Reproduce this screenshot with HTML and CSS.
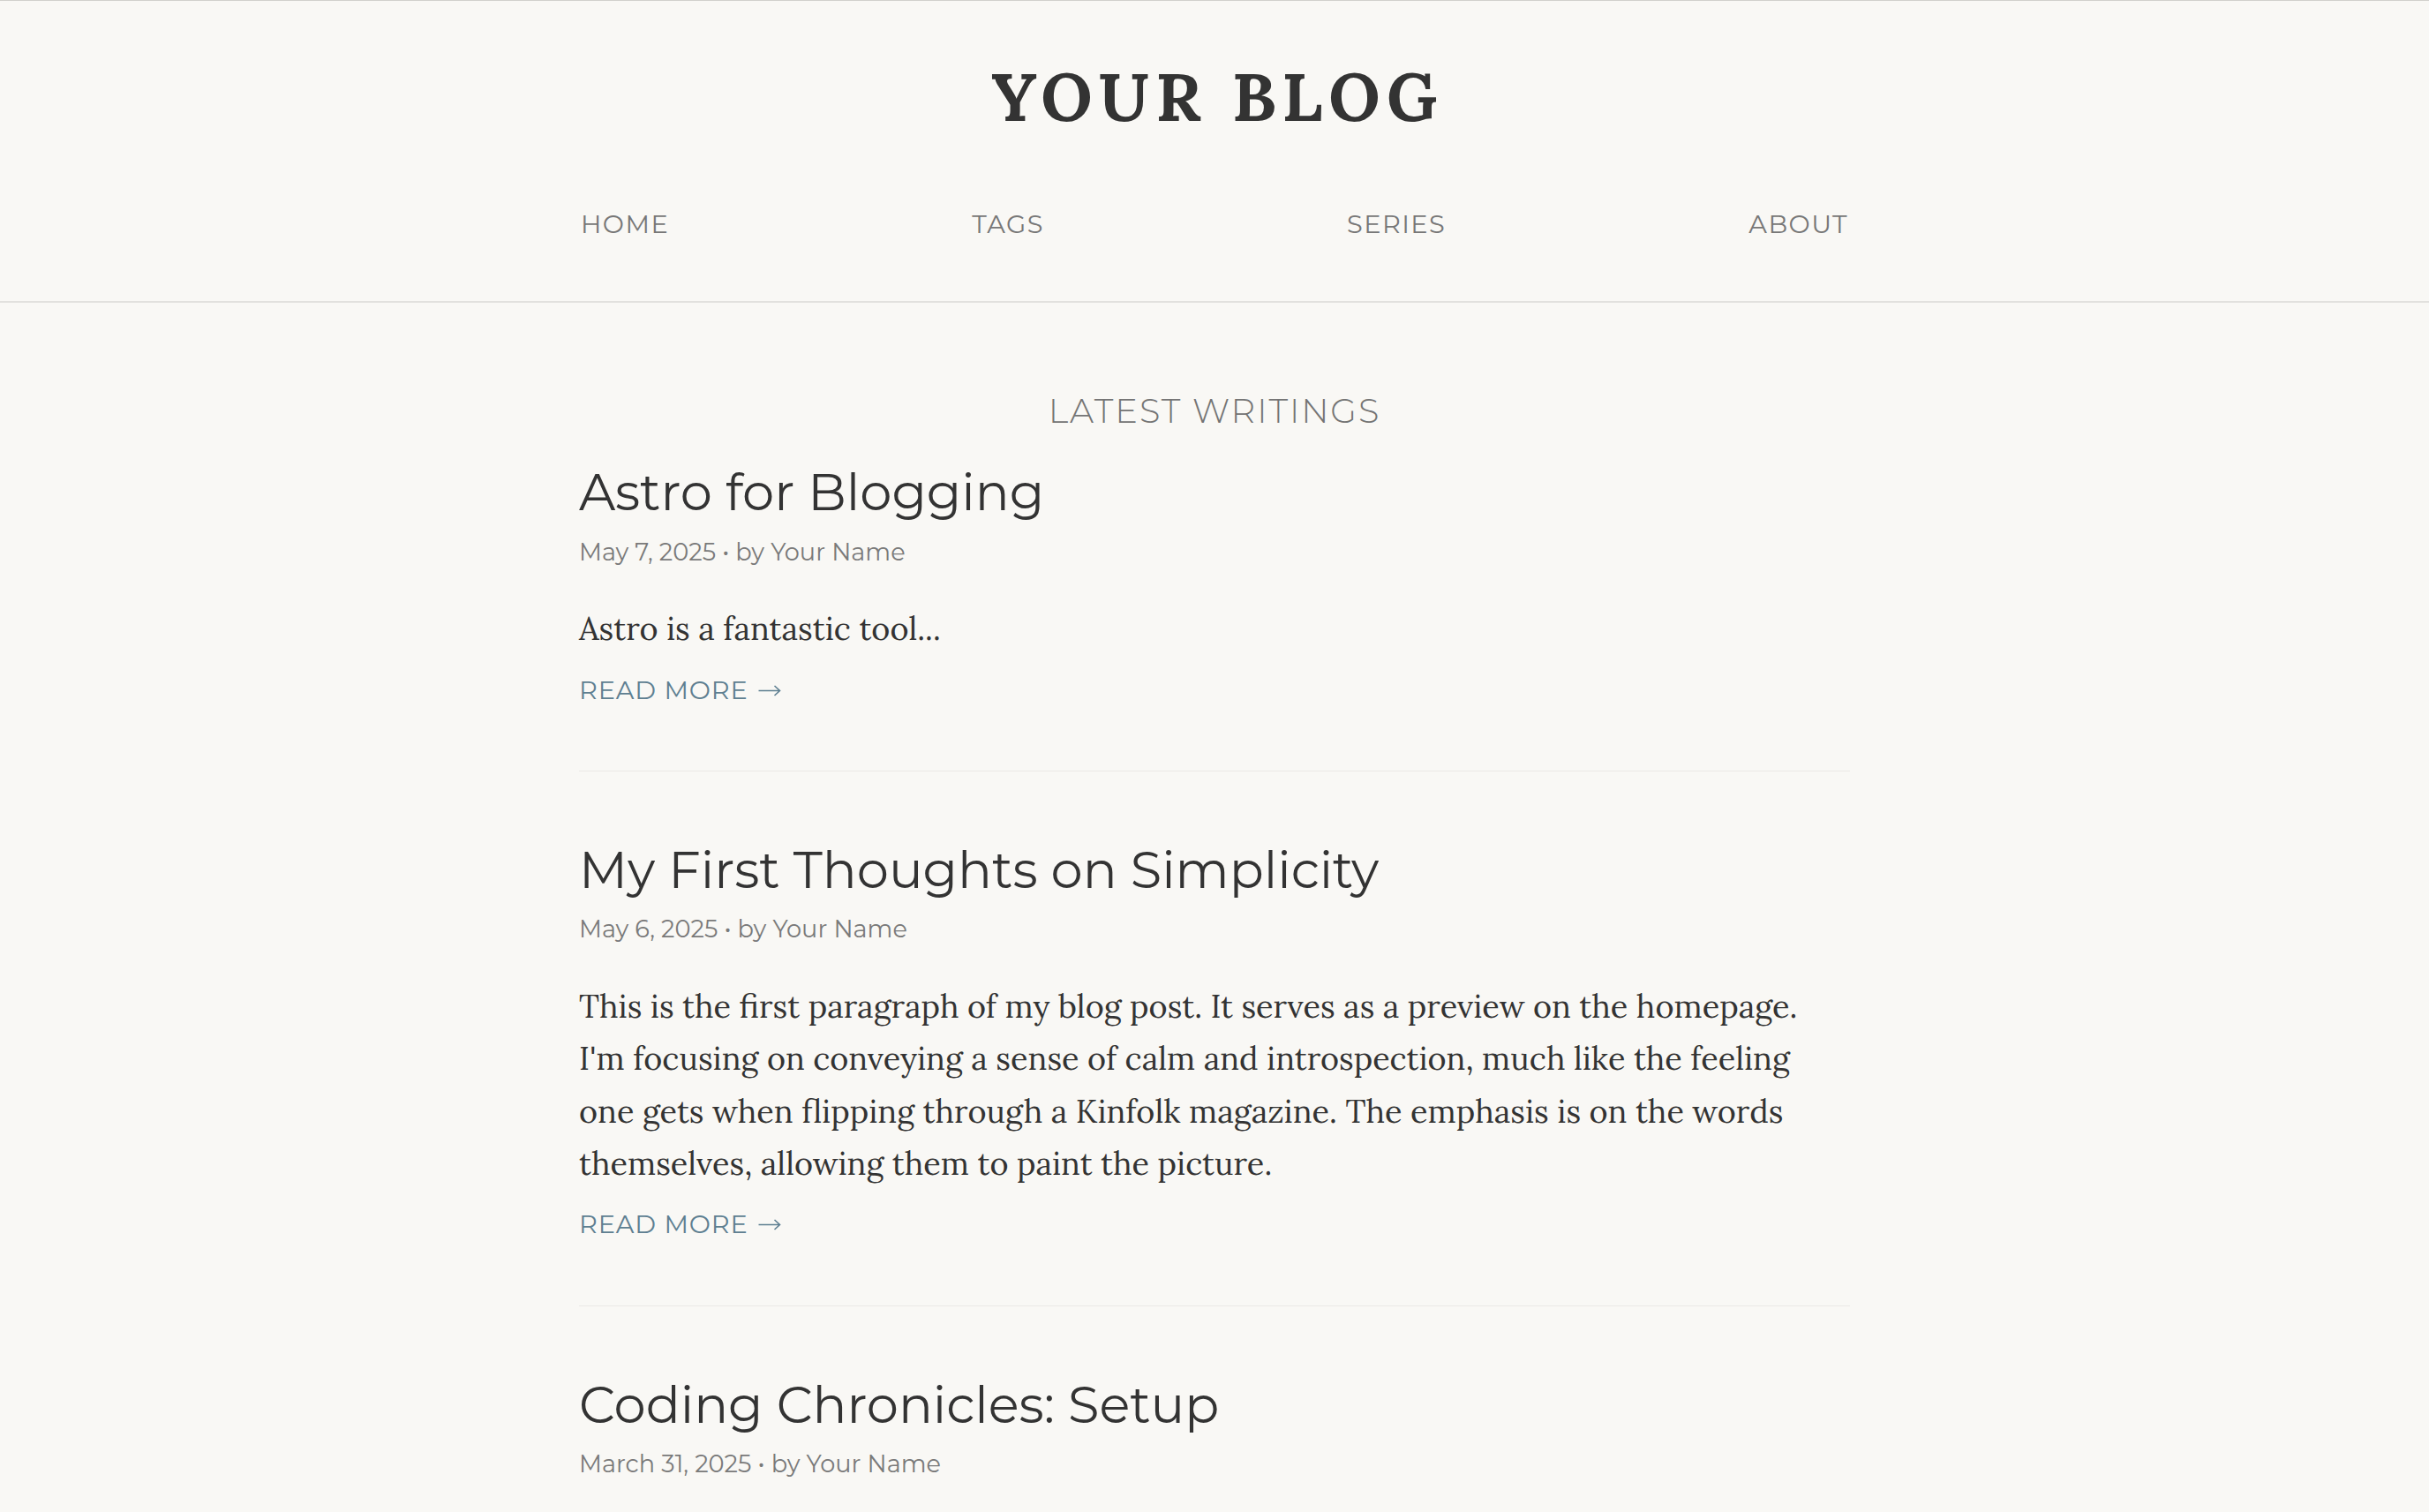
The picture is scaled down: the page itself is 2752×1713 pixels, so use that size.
FILE: index.html
```html
<!DOCTYPE html>
<html lang="en">
<head>
<meta charset="utf-8">
<title>Your Blog</title>
<link rel="stylesheet" href="styles.css">
</head>
<body>
<header class="site-header">
  <h1 class="site-title">YOUR BLOG</h1>
  <nav class="site-nav">
    <a href="#">HOME</a>
    <a href="#">TAGS</a>
    <a href="#">SERIES</a>
    <a href="#">ABOUT</a>
  </nav>
</header>
<main class="content">
  <h2 class="section-title">LATEST WRITINGS</h2>

  <article class="post">
    <h3 class="post-title">Astro for Blogging</h3>
    <div class="post-meta">May 7, 2025 • by Your Name</div>
    <p class="post-excerpt">Astro is a fantastic tool...</p>
    <a class="read-more" href="#">READ MORE<svg class="arrow" width="26" height="13" viewBox="0 0 26 13"><path d="M0.5 6.5H24.5M18.5 1L24.5 6.5L18.5 12" fill="none" stroke="currentColor" stroke-width="1.6"/></svg></a>
  </article>

  <article class="post">
    <h3 class="post-title">My First Thoughts on Simplicity</h3>
    <div class="post-meta">May 6, 2025 • by Your Name</div>
    <p class="post-excerpt">This is the first paragraph of my blog post. It serves as a preview on the homepage. I'm focusing on conveying a sense of calm and introspection, much like the feeling one gets when flipping through a Kinfolk magazine. The emphasis is on the words themselves, allowing them to paint the picture.</p>
    <a class="read-more" href="#">READ MORE<svg class="arrow" width="26" height="13" viewBox="0 0 26 13"><path d="M0.5 6.5H24.5M18.5 1L24.5 6.5L18.5 12" fill="none" stroke="currentColor" stroke-width="1.6"/></svg></a>
  </article>

  <article class="post">
    <h3 class="post-title">Coding Chronicles: Setup</h3>
    <div class="post-meta">March 31, 2025 • by Your Name</div>
    <p class="post-excerpt">Getting a development environment set up the right way is the first step of any project worth doing.</p>
    <a class="read-more" href="#">READ MORE<svg class="arrow" width="26" height="13" viewBox="0 0 26 13"><path d="M0.5 6.5H24.5M18.5 1L24.5 6.5L18.5 12" fill="none" stroke="currentColor" stroke-width="1.6"/></svg></a>
  </article>
</main>
</body>
</html>
```
FILE: styles.css
```css
html, body {
  margin: 0;
  padding: 0;
}

body {
  background: #f9f8f5;
  color: #333333;
  border-top: 1px solid #d1d0cc;
  font-family: "Lora", "Liberation Serif", serif;
}

a {
  text-decoration: none;
  color: inherit;
}

.site-header {
  padding: 63px 0 66px;
  border-bottom: 2px solid #e2e1de;
  text-align: center;
}

.site-title {
  margin: 0;
  font-family: "Lora", "Liberation Serif", serif;
  font-weight: 700;
  font-size: 76px;
  line-height: 1.2;
  letter-spacing: 0.094em;
  color: #333333;
  padding-left: 0.094em;
}

.site-nav {
  width: 1436px;
  margin: 77px auto 0;
  display: flex;
  justify-content: space-between;
  font-family: "Montserrat", "Inter", sans-serif;
  font-weight: 400;
  font-size: 28.8px;
  line-height: 1.5;
  letter-spacing: 0.05em;
}

.site-nav a {
  color: #777777;
}

.content {
  width: 1440px;
  margin: 0 auto;
  padding-top: 100px;
}

.section-title {
  margin: 0 0 34px;
  text-align: center;
  font-family: "Montserrat", "Inter", sans-serif;
  font-weight: 300;
  font-size: 38.4px;
  line-height: 1.2;
  letter-spacing: 0.05em;
  color: #747474;
}

.post {
  padding-bottom: 70px;
  border-bottom: 1px solid #ebe9e6;
}

.post + .post {
  padding-top: 77px;
}

.post-title {
  margin: 0;
  font-family: "Montserrat", "Inter", sans-serif;
  font-weight: 400;
  font-size: 57.6px;
  line-height: 1.2;
  color: #333333;
}

.post-meta {
  margin-top: 13px;
  font-family: "Montserrat", "Inter", sans-serif;
  font-weight: 400;
  font-size: 27.2px;
  line-height: 1.5;
  color: #7a7a7a;
}

.post-excerpt {
  margin: 37px 0 0;
  font-family: "Lora", "Liberation Serif", serif;
  font-size: 36px;
  line-height: 1.65;
  color: #333333;
}

.read-more {
  display: block;
  margin-top: 17px;
  font-family: "Montserrat", "Inter", sans-serif;
  font-weight: 400;
  font-size: 28.8px;
  line-height: 1.5;
  letter-spacing: 0.03em;
  color: #5e7f91;
}

.arrow {
  margin-left: 11px;
  vertical-align: 3px;
}
```
